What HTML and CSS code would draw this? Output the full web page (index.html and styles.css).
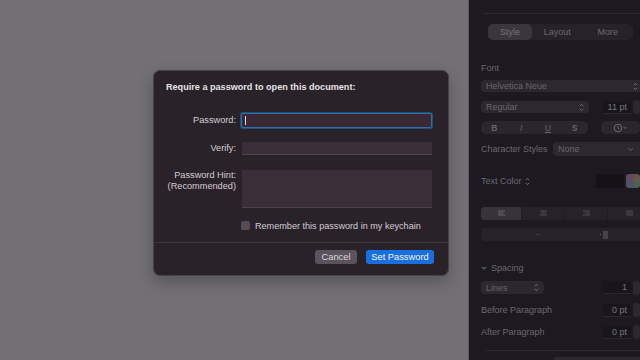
FILE: index.html
```html
<!DOCTYPE html>
<html>
<head>
<meta charset="utf-8">
<link rel="stylesheet" href="styles.css">
</head>
<body>
<div class="app">
  <div class="canvas">
    <div class="dialog">
      <div class="title">Require a password to open this document:</div>
      <div class="form">
        <div class="label l-pass">Password:</div>
        <div class="field focus"><span class="caret"></span></div>
        <div class="label l-verify">Verify:</div>
        <div class="field verify"></div>
        <div class="label l-hint">Password Hint:<br>(Recommended)</div>
        <div class="field hint"></div>
        <div class="spacer"></div>
        <label class="check"><span class="box"></span>Remember this password in my keychain</label>
      </div>
      <div class="footer">
        <button class="btn cancel">Cancel</button>
        <button class="btn primary">Set Password</button>
      </div>
    </div>
  </div>
  <div class="panel">
    <div class="topline"></div>
    <div class="seg">
      <div class="seg-item sel">Style</div>
      <div class="seg-item">Layout</div>
      <div class="seg-item">More</div>
    </div>
    <div class="plabel font-label">Font</div>
    <div class="popup wide">Helvetica Neue<span class="updown">
      <svg width="5" height="9" viewBox="0 0 5 9"><path d="M0.8 3.2 2.5 1.3 4.2 3.2M0.8 5.8 2.5 7.7 4.2 5.8" fill="none" stroke="#77727a" stroke-width="0.9"/></svg></span></div>
    <div class="row r-regular">
      <div class="popup reg">Regular<span class="updown">
        <svg width="5" height="9" viewBox="0 0 5 9"><path d="M0.8 3.2 2.5 1.3 4.2 3.2M0.8 5.8 2.5 7.7 4.2 5.8" fill="none" stroke="#77727a" stroke-width="0.9"/></svg></span></div>
      <div class="numfield">11 pt</div>
      <div class="stepper"></div>
    </div>
    <div class="row r-bius">
      <div class="bius"><span class="b">B</span><span class="it">I</span><span class="ul">U</span><span class="s">S</span></div>
      <div class="clockbtn">
        <svg width="16" height="10" viewBox="0 0 16 10"><circle cx="5" cy="5" r="3.8" fill="none" stroke="#6e6a72" stroke-width="1"/><path d="M5 2.8V5.2L6.6 6" fill="none" stroke="#6e6a72" stroke-width="0.9"/><path d="M10.5 4 12 5.5 13.5 4" fill="none" stroke="#6e6a72" stroke-width="0.9"/></svg>
      </div>
    </div>
    <div class="row r-cs">
      <div class="plabel">Character Styles</div>
      <div class="popup none">None<span class="chev">
        <svg width="7" height="5" viewBox="0 0 7 5"><path d="M1 1.2 3.5 3.6 6 1.2" fill="none" stroke="#6e6a72" stroke-width="0.9"/></svg></span></div>
    </div>
    <div class="row r-tc">
      <div class="plabel">Text Color <span class="tcud">
        <svg width="5" height="9" viewBox="0 0 5 9"><path d="M0.8 3.2 2.5 1.3 4.2 3.2M0.8 5.8 2.5 7.7 4.2 5.8" fill="none" stroke="#77727a" stroke-width="0.9"/></svg></span></div>
      <div class="well"></div>
      <div class="rainbow"></div>
    </div>
    <div class="align">
      <div class="al sel"><svg width="9" height="7" viewBox="0 0 9 7"><path d="M1 1H8M1 3H6M1 5H8" stroke="#6e6a72" stroke-width="0.9"/></svg></div>
      <div class="al"><svg width="9" height="7" viewBox="0 0 9 7"><path d="M1 1H8M2 3H7M1 5H8" stroke="#56525a" stroke-width="0.9"/></svg></div>
      <div class="al"><svg width="9" height="7" viewBox="0 0 9 7"><path d="M1 1H8M3 3H8M1 5H8" stroke="#56525a" stroke-width="0.9"/></svg></div>
      <div class="al"><svg width="9" height="7" viewBox="0 0 9 7"><path d="M1 1H8M1 3H8M1 5H8" stroke="#56525a" stroke-width="0.9"/></svg></div>
    </div>
    <div class="indent">
      <span class="dash"></span>
      <svg width="10" height="8" viewBox="0 0 10 8"><path d="M1 3.5H2M4 1H9M4 3H9M4 5H9M4 7H9" stroke="#6e6a72" stroke-width="0.9"/></svg>
    </div>
    <div class="plabel spacing"><span class="tri"></span>Spacing</div>
    <div class="row r-lines">
      <div class="popup lines">Lines<span class="updown">
        <svg width="5" height="9" viewBox="0 0 5 9"><path d="M0.8 3.2 2.5 1.3 4.2 3.2M0.8 5.8 2.5 7.7 4.2 5.8" fill="none" stroke="#77727a" stroke-width="0.9"/></svg></span></div>
      <div class="numfield">1</div>
      <div class="stepper"></div>
    </div>
    <div class="row r-para">
      <div class="plabel">Before Paragraph</div>
      <div class="numfield">0 pt</div>
      <div class="stepper"></div>
    </div>
    <div class="row r-para2">
      <div class="plabel">After Paragraph</div>
      <div class="numfield">0 pt</div>
      <div class="stepper"></div>
    </div>
    <div class="botline"></div>
    <div class="row r-last">
      <div class="popup last"></div>
    </div>
  </div>
</div>
</body>
</html>
```
FILE: styles.css
```css
* { box-sizing: border-box; }
html, body { margin: 0; padding: 0; }
body {
  width: 640px;
  height: 360px;
  overflow: hidden;
  font-family: "Liberation Sans", Arial, sans-serif;
  background: #737074;
}
.app { display: flex; width: 640px; height: 360px; }
.canvas {
  width: 469px;
  flex: none;
  background: #737074;
  padding: 70px 0 0 153px;
  border-right: 1px solid #5d5a5e;
}
.dialog {
  width: 296px;
  height: 206px;
  background: #2a2229;
  border: 1px solid #4a4249;
  border-radius: 7px;
  box-shadow: 0 6px 16px rgba(0,0,0,0.25);
  display: flex;
  flex-direction: column;
  color: #dcd8dc;
}
.title {
  font-size: 9.1px;
  font-weight: bold;
  padding: 11px 0 0 12px;
  height: 32px;
  color: #e6e2e6;
}
.form {
  display: grid;
  grid-template-columns: 69px 191px;
  column-gap: 5px;
  padding-left: 13px;
  padding-top: 10px;
  grid-auto-rows: auto;
  align-items: start;
}
.label {
  text-align: right;
  font-size: 9.2px;
  color: #d2cdd2;
  line-height: 11px;
}
.l-pass { padding-top: 2px; }
.l-verify { padding-top: 1px; margin-top: 14px; }
.l-hint { margin-top: 15px; }
.field {
  background: #3a2f38;
  border-bottom: 1px solid #4e444c;
}
.focus {
  height: 15px;
  background: #3a2833;
  border: 1.5px solid #2b70ad;
  border-radius: 2px;
  box-shadow: 0 0 0 1px #1f4f7a;
  position: relative;
}
.caret {
  position: absolute;
  left: 3px; top: 2px;
  width: 1px; height: 9px;
  background: #d8d4d8;
}
.verify { height: 13px; margin-top: 14px; margin-left: 1px; }
.hint { height: 38px; margin-top: 15px; margin-left: 1px; }
.spacer { height: 1px; }
.check {
  display: flex;
  align-items: center;
  gap: 5px;
  font-size: 9.1px;
  color: #d2cdd2;
  margin-top: 12px;
  height: 11px;
}
.box {
  width: 9px; height: 9px;
  background: #564c55;
  border-radius: 2px;
  flex: none;
}
.footer {
  margin-top: 11px;
  border-top: 1px solid #3e363d;
  display: flex;
  justify-content: flex-end;
  gap: 9px;
  padding: 7px 14px 0 0;
  flex: 1;
}
.btn {
  font-family: "Liberation Sans", Arial, sans-serif;
  font-size: 9.3px;
  height: 14px;
  border: none;
  border-radius: 3px;
  padding: 0;
  color: #e8e6ea;
  line-height: 14px;
}
.cancel { width: 42px; background: #5b525b; color: #dcd8dc; }
.primary { width: 68px; background: #1a6fe0; color: #f0f4fa; }

/* panel */
.panel {
  flex: 1;
  background: #1c1920;
  padding-left: 12px;
  display: flex;
  flex-direction: column;
  color: #6f6b73;
  font-size: 9px;
  overflow: hidden;
}
.topline {
  height: 14px;
  margin-left: 2px;
  border-bottom: 1px solid #2c2830;
  flex: none;
}
.seg {
  margin: 10px 0 0 7px;
  width: 145px;
  height: 16px;
  background: #26222a;
  border-radius: 5px;
  display: flex;
  flex: none;
}
.seg-item {
  flex: 1;
  text-align: center;
  line-height: 16px;
  color: #6c6870;
  font-size: 9px;
}
.seg-item.sel { flex: none; width: 44px; background: #3a363e; border-radius: 5px; color: #77737b; }
.plabel { font-size: 9px; color: #6c6870; white-space: nowrap; }
.font-label { margin-top: 23px; height: 11px; }
.popup {
  background: #2c2830;
  border-radius: 4px;
  height: 12px;
  line-height: 12px;
  padding-left: 5px;
  color: #69656d;
  font-size: 9px;
  display: flex;
  align-items: center;
  justify-content: space-between;
  flex: none;
}
.updown { display: flex; align-items: center; padding-right: 2px; }
.wide { margin-top: 7px; width: 162px; padding-right: 3px; }
.row { display: flex; align-items: center; flex: none; }
.r-regular { margin-top: 9px; height: 12px; }
.reg { width: 108px; padding-right: 3px; }
.numfield {
  margin-left: 14px;
  width: 31px;
  height: 13px;
  background: #19161b;
  border-bottom: 1px solid #2c2830;
  text-align: right;
  padding-right: 4px;
  line-height: 13px;
  color: #77737b;
  font-size: 9px;
}
.stepper {
  margin-left: 2px;
  width: 8px;
  height: 14px;
  border-radius: 3px;
  background: #2c2830;
}
.r-bius { margin-top: 8px; height: 13px; }
.bius {
  width: 107px;
  height: 13px;
  background: #2a262e;
  border-radius: 5px;
  display: flex;
  align-items: center;
  color: #67636b;
  font-size: 8.5px;
  font-weight: bold;
  position: relative;
}
.bius span { width: 27px; text-align: center; }
.bius .b { margin-left: 0; }
.bius .it { font-style: italic; font-weight: normal; }
.bius .ul { text-decoration: underline; font-weight: normal; }
.clockbtn {
  margin-left: 13px;
  width: 44px;
  height: 13px;
  background: #2a262e;
  border-radius: 5px;
  display: flex;
  align-items: center;
  padding-left: 12px;
}
.r-cs { margin-top: 8px; height: 14px; justify-content: space-between; }
.none { width: 92px; height: 14px; margin-right: -5px; padding-right: 11px; }
.chev { display: flex; }
.r-tc { margin-top: 18px; height: 14px; }
.r-tc .plabel { display: flex; align-items: center; gap: 3px; width: 117px; }
.tcud { display: flex; }
.well { width: 29px; height: 14px; background: #141117; }
.rainbow {
  margin-left: 2px;
  width: 14px; height: 14px;
  border-radius: 3px;
  background: conic-gradient(#9a6a78, #948c6a, #6a8c74, #6a7e98, #866a98, #9a6a78);
  opacity: 0.6;
}
.align {
  margin-top: 19px;
  height: 13px;
  width: 170px;
  display: flex;
  background: #26222a;
  border-radius: 4px;
  flex: none;
}
.al { flex: 1; display: flex; align-items: center; justify-content: center; border-right: 1px solid #1e1b21; }
.al.sel { background: #37333b; border-radius: 4px 0 0 4px; flex: none; width: 41px; }
.indent {
  margin-top: 8px;
  height: 13px;
  width: 170px;
  background: #26222a;
  border-radius: 4px;
  display: flex;
  align-items: center;
  padding-left: 55px;
  flex: none;
}
.dash { width: 5px; height: 1px; background: #3a363e; margin-right: 58px; }
.spacing { margin-top: 22px; height: 11px; display: flex; align-items: center; gap: 3px; }
.tri {
  width: 0; height: 0;
  border-left: 3px solid transparent;
  border-right: 3px solid transparent;
  border-top: 3px solid #514d55;
  margin-right: 1px;
}
.r-lines { margin-top: 8px; height: 13px; }
.lines { width: 63px; height: 13px; padding-right: 3px; margin-right: 45px; }
.r-lines .numfield { margin-left: 14px; }
.r-para { margin-top: 9px; height: 14px; }
.r-para .plabel, .r-para2 .plabel { width: 122px; }
.r-para2 { margin-top: 8px; height: 14px; }
.botline { margin-top: 11px; margin-left: 4px; height: 1px; background: #2c2830; flex: none; }
.r-last { margin-top: 6px; }
.last { margin-left: 72px; width: 100px; height: 12px; }
```
